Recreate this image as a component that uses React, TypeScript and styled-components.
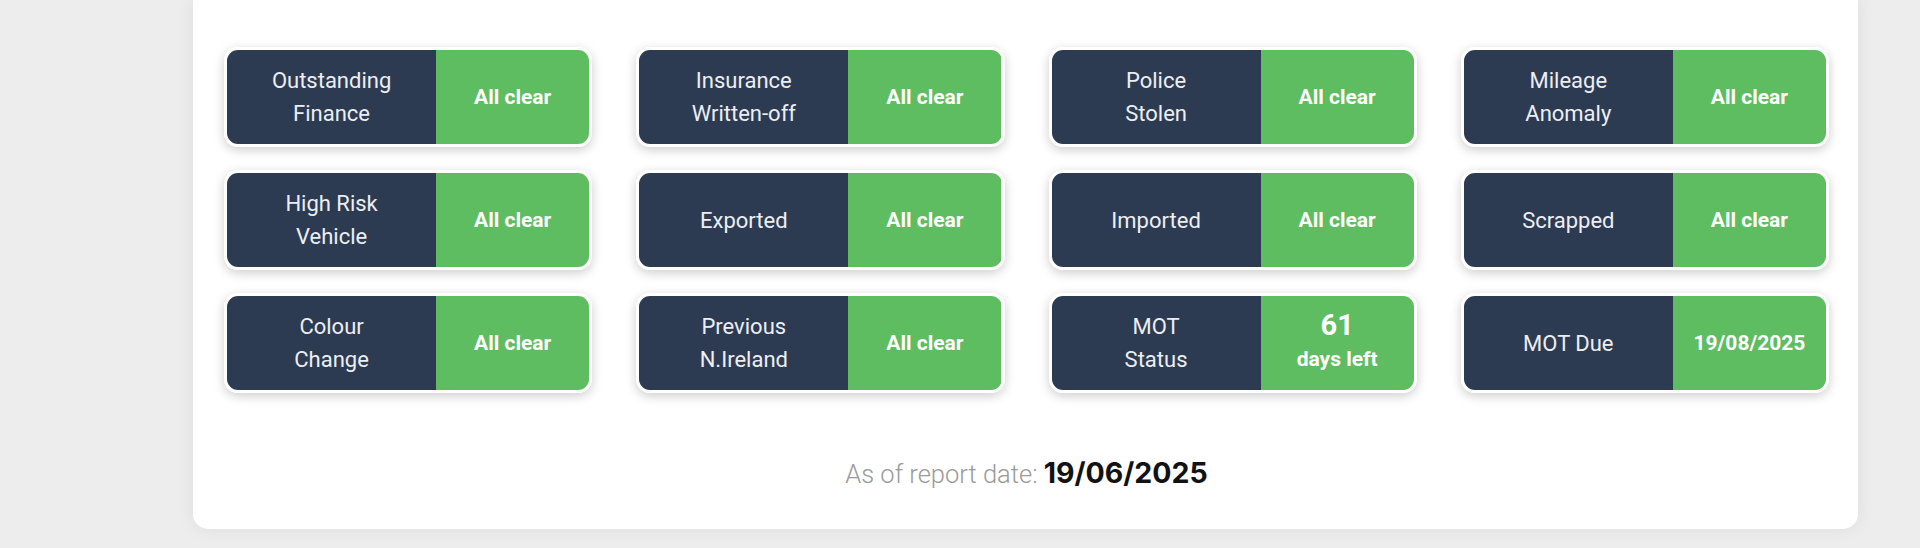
import React from "react";
import styled, { createGlobalStyle } from "styled-components";

const GlobalStyle = createGlobalStyle`
  html, body {
    margin: 0;
    padding: 0;
    background: #ededed;
  }
  body {
    font-family: Roboto, "Liberation Sans", Arial, sans-serif;
    -webkit-font-smoothing: antialiased;
  }
`;

const Page = styled.div`
  width: 1920px;
  height: 548px;
  box-sizing: border-box;
  padding: 0 62px 19px 193px;
  display: flex;
  flex-direction: column;
  justify-content: flex-end;
`;

const Card = styled.section`
  background: #ffffff;
  border-radius: 0 0 15px 15px;
  box-shadow: 0 0 18px rgba(0, 0, 0, 0.07);
  padding: 50px 29px 35px 31px;
`;

const Grid = styled.div`
  display: grid;
  grid-template-columns: repeat(4, 1fr);
  column-gap: 44px;
  row-gap: 23px;
`;

const Badge = styled.div`
  display: grid;
  grid-template-columns: 209fr 153fr;
  height: 100px;
  box-sizing: border-box;
  border: 3px solid #ffffff;
  border-radius: 14px;
  overflow: hidden;
  box-shadow: 0 3px 11px rgba(0, 0, 0, 0.2);
`;

const Label = styled.div`
  background: #2d3b52;
  color: #eceef2;
  display: flex;
  align-items: center;
  justify-content: center;
  text-align: center;
  font-size: 22px;
  line-height: 33px;
  font-weight: 400;
`;

const Result = styled.div`
  background: #5dbd60;
  color: #ffffff;
  display: flex;
  flex-direction: column;
  align-items: center;
  justify-content: center;
  text-align: center;
  font-size: 21px;
  line-height: 33px;
  font-weight: 700;
`;

const Count = styled.span`
  font-size: 29px;
  line-height: 32px;
`;

const CountUnit = styled.span`
  font-size: 21px;
  line-height: 36px;
`;

const Footer = styled.p`
  margin: 0;
  padding-top: 60px;
  display: flex;
  align-items: baseline;
  justify-content: center;
  line-height: 40px;
`;

const FooterLabel = styled.span`
  font-family: Roboto, "Liberation Sans", sans-serif;
  font-weight: 300;
  font-size: 25.5px;
  color: #9a9a9a;
  white-space: pre;
`;

const FooterDate = styled.span`
  font-family: Inter, "DejaVu Sans", sans-serif;
  font-weight: 700;
  font-size: 28.5px;
  color: #121212;
`;

type Check = {
  label: string[];
  value?: string;
  days?: number;
};

const checks: Check[] = [
  { label: ["Outstanding", "Finance"] },
  { label: ["Insurance", "Written-off"] },
  { label: ["Police", "Stolen"] },
  { label: ["Mileage", "Anomaly"] },
  { label: ["High Risk", "Vehicle"] },
  { label: ["Exported"] },
  { label: ["Imported"] },
  { label: ["Scrapped"] },
  { label: ["Colour", "Change"] },
  { label: ["Previous", "N.Ireland"] },
  { label: ["MOT", "Status"], days: 61 },
  { label: ["MOT Due"], value: "19/08/2025" },
];

export default function App() {
  return (
    <>
      <GlobalStyle />
      <Page>
        <Card>
          <Grid>
            {checks.map((c) => (
              <Badge key={c.label.join(" ")}>
                <Label>
                  <div>
                    {c.label.map((line, i) => (
                      <React.Fragment key={line}>
                        {i > 0 && <br />}
                        {line}
                      </React.Fragment>
                    ))}
                  </div>
                </Label>
                <Result>
                  {c.days !== undefined ? (
                    <>
                      <Count>{c.days}</Count>
                      <CountUnit>days left</CountUnit>
                    </>
                  ) : (
                    c.value ?? "All clear"
                  )}
                </Result>
              </Badge>
            ))}
          </Grid>
          <Footer>
            <FooterLabel>As of report date: </FooterLabel>
            <FooterDate>19/06/2025</FooterDate>
          </Footer>
        </Card>
      </Page>
    </>
  );
}
